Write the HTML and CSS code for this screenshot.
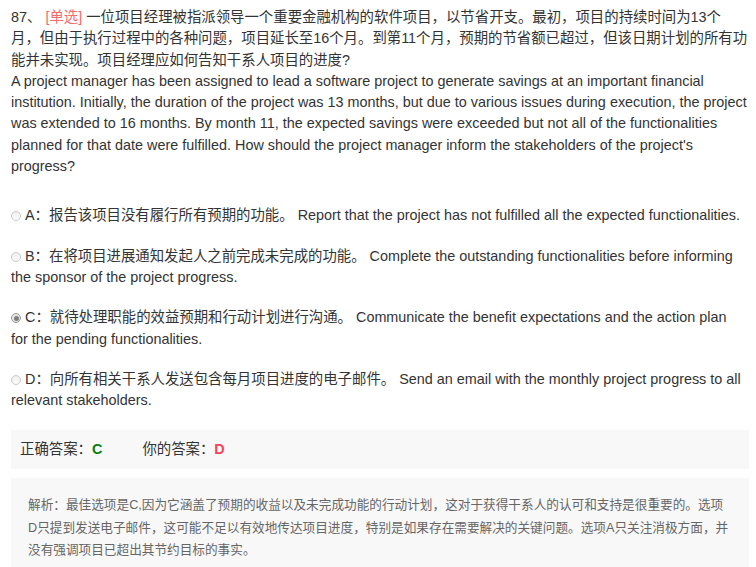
FILE: index.html
```html
<!DOCTYPE html>
<html lang="zh-CN">
<head>
<meta charset="utf-8">
<title>87</title>
<link rel="stylesheet" href="styles.css">
</head>
<body>
<div class="page">
  <div class="question">
    <p class="q-cn">87、 <span class="tag">[单选]</span> 一位项目经理被指派领导一个重要金融机构的软件项目，以节省开支。最初，项目的持续时间为13个月，但由于执行过程中的各种问题，项目延长至16个月。到第11个月，预期的节省额已超过，但该日期计划的所有功能并未实现。项目经理应如何告知干系人项目的进度?</p>
    <p class="q-en">A project manager has been assigned to lead a software project to generate savings at an important financial institution. Initially, the duration of the project was 13 months, but due to various issues during execution, the project was extended to 16 months. By month 11, the expected savings were exceeded but not all of the functionalities planned for that date were fulfilled. How should the project manager inform the stakeholders of the project's progress?</p>
  </div>
  <div class="options">
    <p class="option"><span class="radio"></span>A：报告该项目没有履行所有预期的功能。 Report that the project has not fulfilled all the expected functionalities.</p>
    <p class="option"><span class="radio"></span>B：在将项目进展通知发起人之前完成未完成的功能。 Complete the outstanding functionalities before informing the sponsor of the project progress.</p>
    <p class="option"><span class="radio checked"></span>C：就待处理职能的效益预期和行动计划进行沟通。 Communicate the benefit expectations and the action plan for the pending functionalities.</p>
    <p class="option"><span class="radio"></span>D：向所有相关干系人发送包含每月项目进度的电子邮件。 Send an email with the monthly project progress to all relevant stakeholders.</p>
  </div>
  <div class="answer">
    <span class="ans-item">正确答案：<b class="right">C</b></span>
    <span class="ans-item">你的答案：<b class="wrong">D</b></span>
  </div>
  <div class="explain">
    <p>解析：最佳选项是C,因为它涵盖了预期的收益以及未完成功能的行动计划，这对于获得干系人的认可和支持是很重要的。选项D只提到发送电子邮件，这可能不足以有效地传达项目进度，特别是如果存在需要解决的关键问题。选项A只关注消极方面，并没有强调项目已超出其节约目标的事实。</p>
  </div>
</div>
</body>
</html>
```
FILE: styles.css
```css
html, body {
  margin: 0;
  padding: 0;
  background: #fff;
}
body {
  font-family: "Liberation Sans", "Noto Sans CJK SC", sans-serif;
  font-size: 14.4px;
  line-height: 21.3px;
  color: #333;
}
.page {
  padding: 7px 7px 0 11px;
}
p {
  margin: 0;
}
.question {
  margin-bottom: 28px;
}
.tag {
  color: #f56c6c;
}
.options {
  display: flex;
  flex-direction: column;
  gap: 19px;
  padding-right: 4px;
}
.radio {
  display: inline-block;
  box-sizing: border-box;
  width: 10px;
  height: 10px;
  border-radius: 50%;
  border: 1px solid #c9c9c9;
  background: linear-gradient(#f0f0f0, #fbfbfb);
  margin-right: 4px;
  vertical-align: -1px;
  position: relative;
}
.radio.checked {
  border-color: #9a9a9a;
  background: #e6e6e6;
}
.radio.checked::after {
  content: "";
  position: absolute;
  left: 1.5px;
  top: 1.5px;
  width: 5px;
  height: 5px;
  border-radius: 50%;
  background: #7d7d7d;
}
.answer {
  margin-top: 19px;
  background: #f8f8f8;
  height: 39px;
  display: flex;
  align-items: center;
  padding-left: 9px;
  gap: 40px;
}
.answer b {
  font-weight: bold;
}
.right {
  color: #0a7d0a;
}
.wrong {
  color: #f5455c;
}
.explain {
  margin-top: 9px;
  background: #f8f8f8;
  padding: 16px 18px 20px 17px;
  color: #666;
  font-size: 12.65px;
  line-height: 22.5px;
}
```
